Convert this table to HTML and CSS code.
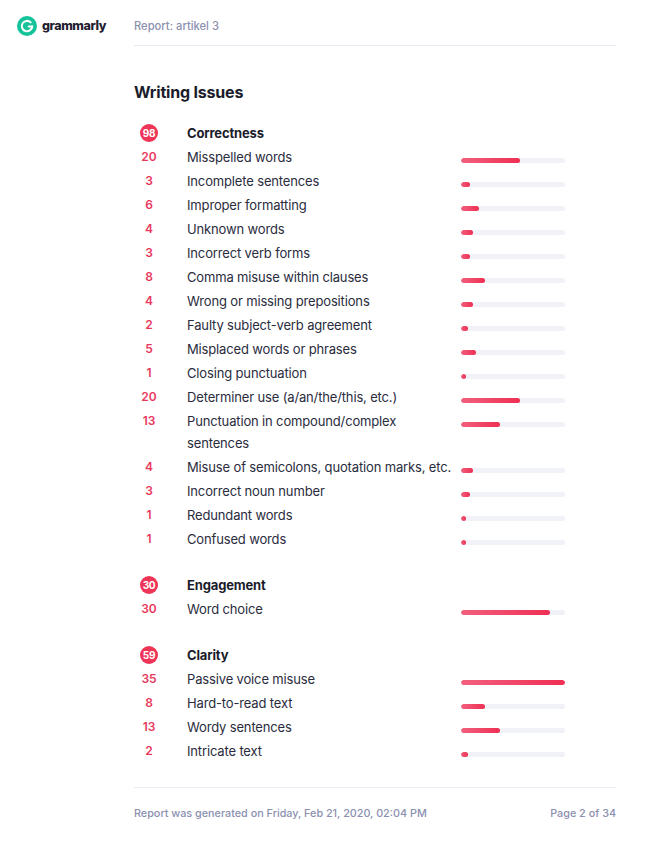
FILE: index.html
```html
<!DOCTYPE html>
<html lang="en">
<head>
<meta charset="utf-8">
<title>Report: artikel 3</title>
<link rel="stylesheet" href="styles.css">
</head>
<body>
<div class="page">
  <header class="topbar">
    <div class="brand">
      <svg class="logo" viewBox="0 0 20 20" width="20" height="20" aria-hidden="true">
        <circle cx="10" cy="10" r="10" fill="#15c39a"/>
        <path d="M13.7 6.4 A5.2 5.2 0 1 0 15.2 10.6" fill="none" stroke="#fff" stroke-width="2" stroke-linecap="round"/>
        <path d="M11.6 10.6 H15.2" fill="none" stroke="#fff" stroke-width="2" stroke-linecap="round"/>
        <path d="M14.2 13.2 L15.3 10.7" fill="none" stroke="#fff" stroke-width="1.6" stroke-linecap="round"/>
      </svg>
      <span class="brand-name">grammarly</span>
    </div>
    <div class="report-title">Report: artikel 3</div>
  </header>

  <main class="content">
    <h1 class="heading">Writing Issues</h1>

    <section class="group">
      <div class="row head"><span class="badge">98</span><span class="label">Correctness</span></div>
      <div class="row"><span class="num">20</span><span class="label">Misspelled words</span><span class="track"><span class="fill" style="width:59.4px"></span></span></div>
      <div class="row"><span class="num">3</span><span class="label">Incomplete sentences</span><span class="track"><span class="fill" style="width:9px"></span></span></div>
      <div class="row"><span class="num">6</span><span class="label">Improper formatting</span><span class="track"><span class="fill" style="width:17.8px"></span></span></div>
      <div class="row"><span class="num">4</span><span class="label">Unknown words</span><span class="track"><span class="fill" style="width:12px"></span></span></div>
      <div class="row"><span class="num">3</span><span class="label">Incorrect verb forms</span><span class="track"><span class="fill" style="width:9px"></span></span></div>
      <div class="row"><span class="num">8</span><span class="label">Comma misuse within clauses</span><span class="track"><span class="fill" style="width:23.8px"></span></span></div>
      <div class="row"><span class="num">4</span><span class="label">Wrong or missing prepositions</span><span class="track"><span class="fill" style="width:12px"></span></span></div>
      <div class="row"><span class="num">2</span><span class="label">Faulty subject-verb agreement</span><span class="track"><span class="fill" style="width:6.5px"></span></span></div>
      <div class="row"><span class="num">5</span><span class="label">Misplaced words or phrases</span><span class="track"><span class="fill" style="width:14.9px"></span></span></div>
      <div class="row"><span class="num">1</span><span class="label">Closing punctuation</span><span class="track"><span class="fill" style="width:4.5px"></span></span></div>
      <div class="row"><span class="num">20</span><span class="label">Determiner use (a/an/the/this, etc.)</span><span class="track"><span class="fill" style="width:59.4px"></span></span></div>
      <div class="row"><span class="num">13</span><span class="label">Punctuation in compound/complex sentences</span><span class="track"><span class="fill" style="width:38.6px"></span></span></div>
      <div class="row"><span class="num">4</span><span class="label">Misuse of semicolons, quotation marks, etc.</span><span class="track"><span class="fill" style="width:12px"></span></span></div>
      <div class="row"><span class="num">3</span><span class="label">Incorrect noun number</span><span class="track"><span class="fill" style="width:9px"></span></span></div>
      <div class="row"><span class="num">1</span><span class="label">Redundant words</span><span class="track"><span class="fill" style="width:4.5px"></span></span></div>
      <div class="row"><span class="num">1</span><span class="label">Confused words</span><span class="track"><span class="fill" style="width:4.5px"></span></span></div>
    </section>

    <section class="group">
      <div class="row head"><span class="badge">30</span><span class="label">Engagement</span></div>
      <div class="row"><span class="num">30</span><span class="label">Word choice</span><span class="track"><span class="fill" style="width:89.1px"></span></span></div>
    </section>

    <section class="group">
      <div class="row head"><span class="badge">59</span><span class="label">Clarity</span></div>
      <div class="row"><span class="num">35</span><span class="label">Passive voice misuse</span><span class="track"><span class="fill" style="width:104px"></span></span></div>
      <div class="row"><span class="num">8</span><span class="label">Hard-to-read text</span><span class="track"><span class="fill" style="width:23.8px"></span></span></div>
      <div class="row"><span class="num">13</span><span class="label">Wordy sentences</span><span class="track"><span class="fill" style="width:38.6px"></span></span></div>
      <div class="row"><span class="num">2</span><span class="label">Intricate text</span><span class="track"><span class="fill" style="width:7px"></span></span></div>
    </section>
  </main>

  <footer class="footer">
    <span>Report was generated on Friday, Feb 21, 2020, 02:04 PM</span>
    <span>Page 2 of 34</span>
  </footer>
</div>
</body>
</html>
```

FILE: styles.css
```css
* { box-sizing: border-box; }

html, body {
  margin: 0;
  padding: 0;
  background: #ffffff;
}

body {
  font-family: "Inter", "Noto Sans", "Liberation Sans", sans-serif;
  color: #23253a;
  -webkit-font-smoothing: antialiased;
}

.page {
  width: 650px;
}

.topbar {
  display: flex;
  align-items: flex-start;
}

.brand {
  flex: 0 0 134px;
  display: flex;
  align-items: center;
  gap: 5px;
  padding: 16px 0 0 17px;
}

.logo {
  display: block;
  flex: 0 0 20px;
}

.brand-name {
  font-size: 12.5px;
  font-weight: 800;
  letter-spacing: -0.4px;
  color: #1e2030;
  line-height: 20px;
}

.report-title {
  flex: 0 0 482px;
  padding: 18px 0 11px;
  font-size: 11.2px;
  font-weight: 500;
  line-height: 16px;
  color: #8b90b0;
  border-bottom: 1px solid #e8e8f2;
}

.content {
  margin-left: 134px;
  width: 482px;
  padding-right: 51px;
}

.heading {
  margin: 34px 0 17px;
  font-size: 16px;
  line-height: 24px;
  font-weight: 700;
  color: #1b1c2b;
  letter-spacing: -0.2px;
}

.group + .group {
  margin-top: 22px;
}

.row {
  display: grid;
  grid-template-columns: 30px 1fr 104px;
  padding: 1px 0;
  font-size: 13px;
  line-height: 22px;
}

.num {
  text-align: center;
  font-size: 12px;
  font-weight: 600;
  color: #e8395d;
}

.label {
  padding: 0 4px 0 23px;
  color: #2a2c3d;
  letter-spacing: -0.15px;
}

.head .label {
  font-weight: 700;
  color: #1b1c2b;
}

.badge {
  justify-self: center;
  align-self: center;
  width: 18px;
  height: 18px;
  border-radius: 50%;
  background: #ee3457;
  color: #ffffff;
  font-size: 10px;
  font-weight: 700;
  line-height: 18px;
  text-align: center;
  letter-spacing: -0.3px;
}

.track {
  align-self: start;
  margin-top: 12px;
  height: 5px;
  border-radius: 3px;
  background: #f1f1f8;
  overflow: hidden;
}

.fill {
  display: block;
  height: 5px;
  border-radius: 3px;
  background: linear-gradient(90deg, #f2607e, #ee2f53);
}

.footer {
  margin: 24px 0 0 134px;
  width: 482px;
  border-top: 1px solid #ececf4;
  padding-top: 18px;
  display: flex;
  justify-content: space-between;
  font-size: 10.8px;
  font-weight: 500;
  line-height: 16px;
  color: #8b90b0;
}
```
